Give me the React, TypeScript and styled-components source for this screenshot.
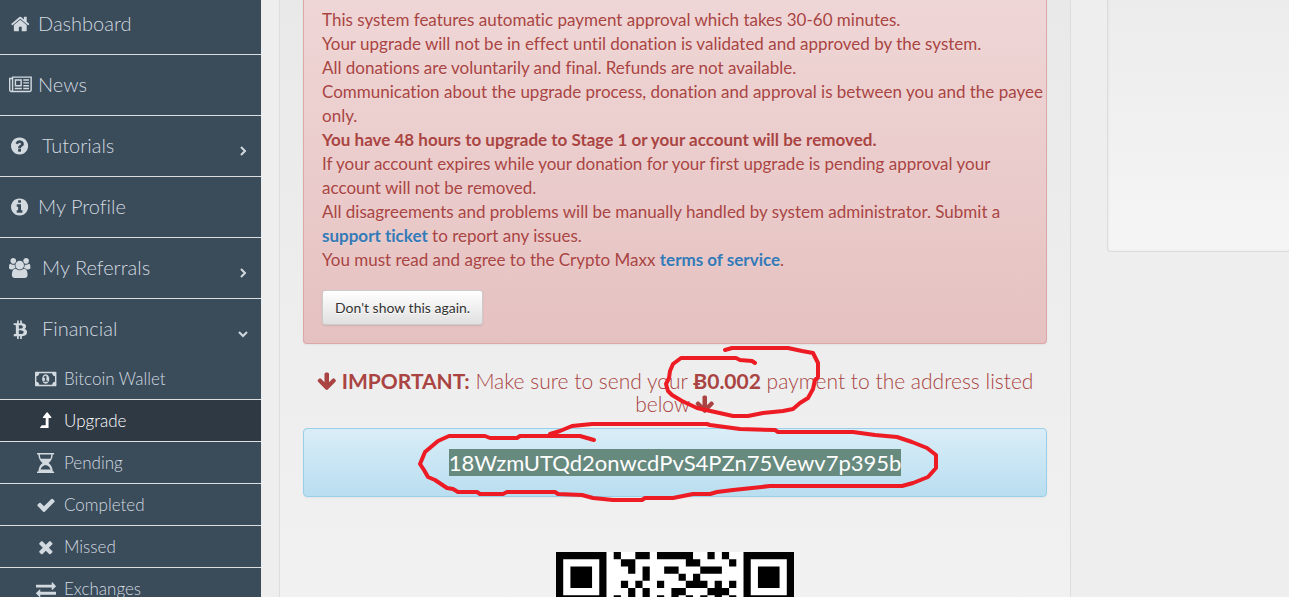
import React from 'react';
import styled, { createGlobalStyle } from 'styled-components';

const GlobalStyle = createGlobalStyle`
  *, *::before, *::after { box-sizing: border-box; }
  html, body { margin: 0; }
  body {
    background: #eeeeee;
    font-family: Lato, "Liberation Sans", sans-serif;
    font-size: 17px;
    font-variant-ligatures: none;
    line-height: 24px;
  }
`;

const DISC =
  'm640 416q0 209-103 385.5t-279.5 279.5-385.5 103-385.5-103-279.5-279.5-103-385.5 103-385.5 279.5-279.5 385.5-103 385.5 103 279.5 279.5 103 385.5z';

const GLYPHS = {
  home: { box: '64 0 1664 1792', d: 'M1472 992v480q0 26-19 45t-45 19h-384v-384h-256v384h-384q-26 0-45-19t-19-45v-480q0-1 .5-3t.5-3l575-474 575 474q1 2 1 6zm223-69l-62 74q-8 9-21 11h-3q-13 0-21-7l-692-577-692 577q-12 8-24 7-13-2-21-11l-62-74q-8-10-7-23.5t11-21.5l719-599q32-26 76-26t76 26l244 204v-195q0-14 9-23t23-9h192q14 0 23 9t9 23v408l219 182q10 8 11 21.5t-7 23.5z' },
  news: { box: '0 0 2048 1792', d: 'M1024 512h-384v384h384v-384zm128 640v128h-640v-128h640zm0-768v640h-640v-640h640zm640 768v128h-512v-128h512zm0-256v128h-512v-128h512zm0-256v128h-512v-128h512zm0-256v128h-512v-128h512zm-1536 960v-960h-128v960q0 26 19 45t45 19 45-19 19-45zm1664 0v-1088h-1536v1088q0 33-11 64h1483q26 0 45-19t19-45zm128-1216v1216q0 80-56 136t-136 56h-1664q-80 0-136-56t-56-136v-1088h256v-128h1792z' },
  question: { box: '128 0 1536 1792', d: 'M1024 1376v-192q0-14-9-23t-23-9h-192q-14 0-23 9t-9 23v192q0 14 9 23t23 9h192q14 0 23-9t9-23zm256-672q0-88-55.5-163t-138.5-116-170-41q-243 0-371 213-15 24 8 42l132 100q7 6 19 6 16 0 25-12 53-68 86-92 34-24 86-24 48 0 85.5 26t37.5 59q0 38-20 61t-68 45q-63 28-115.5 86.5t-52.5 125.5v36q0 14 9 23t23 9h192q14 0 23-9t9-23q0-19 21.5-49.5t54.5-49.5q32-18 49-28.5t46-35 44.5-48 28-60.5 12.5-81zm384 192q0 209-103 385.5t-279.5 279.5-385.5 103-385.5-103-279.5-279.5-103-385.5 103-385.5 279.5-279.5 385.5-103 385.5 103 279.5 279.5 103 385.5z' },
  info: { box: '128 0 1536 1792', d: 'M1152 1376v-160q0-14-9-23t-23-9h-96v-512q0-14-9-23t-23-9h-320q-14 0-23 9t-9 23v160q0 14 9 23t23 9h96v320h-96q-14 0-23 9t-9 23v160q0 14 9 23t23 9h448q14 0 23-9t9-23zm-128-896v-160q0-14-9-23t-23-9h-192q-14 0-23 9t-9 23v160q0 14 9 23t23 9h192q14 0 23-9t9-23z' + DISC },
  users: { box: '-64 0 1920 1792', d: 'M529 896q-162 5-265 128h-134q-82 0-138-40.5t-56-118.5q0-353 124-353 6 0 43.5 21t97.5 42.5 119 21.5q67 0 133-23-5 37-5 66 0 139 81 256zm1071 637q0 120-73 189.5t-194 69.5h-874q-121 0-194-69.5t-73-189.5q0-53 3.5-103.5t14-109 26.5-108.5 43-97.5 62-81 85.5-53.5 111.5-20q10 0 43 21.5t73 48 107 48 135 21.5 135-21.5 107-48 73-48 43-21.5q61 0 111.5 20t85.5 53.5 62 81 43 97.5 26.5 108.5 14 109 3.5 103.5zm-1024-1277q0 106-75 181t-181 75-181-75-75-181 75-181 181-75 181 75 75 181zm704 384q0 159-112.5 271.5t-271.5 112.5-271.5-112.5-112.5-271.5 112.5-271.5 271.5-112.5 271.5 112.5 112.5 271.5zm576 225q0 78-56 118.5t-138 40.5h-134q-103-123-265-128 81-117 81-256 0-29-5-66 66 23 133 23 59 0 119-21.5t97.5-42.5 43.5-21q124 0 124 353zm-128-609q0 106-75 181t-181 75-181-75-75-181 75-181 181-75 181 75 75 181z' },
  bitcoin: { box: '0 0 1280 1792', d: 'M1167 640q18 182-131 258 117 28 175 103t45 214q-7 71-32.5 125t-64.5 89-97 58.5-121.5 34.5-145.5 15v255h-154v-251q-80 0-122-1v252h-154v-255q-18 0-54-.5t-55-.5h-200l31-183h111q50 0 58-51v-402h16q-6-1-16-1v-287q-13-68-89-68h-111v-164l212 1q64 0 97-1v-252h154v247q82-2 122-2v-245h154v252q79 7 140 22.5t113 45 82.5 78 36.5 114.5zm-215 545q0-36-15-64t-37-46-57.5-30.5-65.5-18.5-74-9-69-3-64.5 1-47.5 1v338q8 0 37 .5t48 .5 53-1.5 58.5-4 57-8.5 55.5-14 47.5-21 39.5-30 24.5-40 9.5-51zm-71-476q0-33-12.5-58.5t-30.5-42-48-28-55-16.5-61.5-8-58-2.5-54 1-39.5.5v307q5 0 34.5.5t46.5 0 50-2 55-5.5 51.5-11 48.5-18.5 37-27 27-38.5 9-51z' },
  money: { box: '0 0 1920 1792', d: 'M768 1152h384v-96h-128v-448h-114l-148 137 77 80q42-37 55-57h2v288h-128v96zm512-256q0 70-21 142t-59.5 134-101.5 101-138 39-138-39-101.5-101-59.5-134-21-142 21-142 59.5-134 101.5-101 138-39 138 39 101.5 101 59.5 134 21 142zm512 256v-512q-106 0-181-75t-75-181h-1152q0 106-75 181t-181 75v512q106 0 181 75t75 181h1152q0-106 75-181t181-75zm128-832v1152q0 26-19 45t-45 19h-1792q-26 0-45-19t-19-45v-1152q0-26 19-45t45-19h1792q26 0 45 19t19 45z' },
  levelUp: { box: '0 0 1024 1792', d: 'M1018 595q-18 37-58 37h-192v864q0 14-9 23t-23 9h-704q-21 0-29-18-8-20 4-35l160-192q9-11 25-11h320v-640h-192q-40 0-58-37-17-37 9-68l320-384q18-22 49-22t49 22l320 384q27 32 9 68z' },
  hourglass: { box: '128 0 1536 1792', d: 'M1536 128q0 261-106.5 461.5t-266.5 306.5q160 106 266.5 306.5t106.5 461.5h96q14 0 23 9t9 23v64q0 14-9 23t-23 9h-1472q-14 0-23-9t-9-23v-64q0-14 9-23t23-9h96q0-261 106.5-461.5t266.5-306.5q-160-106-266.5-306.5t-106.5-461.5h-96q-14 0-23-9t-9-23v-64q0-14 9-23t23-9h1472q14 0 23 9t9 23v64q0 14-9 23t-23 9h-96zm-128 0h-1024q0 206 85 384h854q85-178 85-384zm-57 1344q-54-141-145.5-241.5t-194.5-142.5h-230q-103 42-194.5 142.5t-145.5 241.5h910z' },
  check: { box: '0 0 1792 1792', d: 'M1671 566q0 40-28 68l-724 724-136 136q-28 28-68 28t-68-28l-136-136-362-362q-28-28-28-68t28-68l136-136q28-28 68-28t68 28l294 295 656-657q28-28 68-28t68 28l136 136q28 28 28 68z' },
  times: { box: '192 0 1408 1792', d: 'M1490 1322q0 40-28 68l-136 136q-28 28-68 28t-68-28l-294-294-294 294q-28 28-68 28t-68-28l-136-136q-28-28-28-68t28-68l294-294-294-294q-28-28-28-68t28-68l136-136q28-28 68-28t68 28l294 294 294-294q28-28 68-28t68 28l136 136q28 28 28 68t-28 68l-294 294 294 294q28 28 28 68z' },
  exchange: { box: '0 0 1792 1792', d: 'M1792 1184v192q0 13-9.5 22.5t-22.5 9.5h-1376v192q0 13-9.5 22.5t-22.5 9.5q-12 0-24-10l-319-320q-9-9-9-22 0-14 9-23l320-320q9-9 23-9 13 0 22.5 9.5t9.5 22.5v192h1376q13 0 22.5 9.5t9.5 22.5zm0-544q0 14-9 23l-320 320q-9 9-23 9-13 0-22.5-9.5t-9.5-22.5v-192h-1376q-13 0-22.5-9.5t-9.5-22.5v-192q0-13 9.5-22.5t22.5-9.5h1376v-192q0-14 9-23t23-9q12 0 24 10l319 319q9 9 9 23z' },
  arrowDown: { box: '64 0 1664 1792', d: 'M1675 832q0 53-37 90l-651 652q-39 37-91 37-53 0-90-37l-651-652q-38-36-38-90 0-53 38-91l74-75q39-37 91-37 53 0 90 37l294 294v-704q0-52 38-90t90-38h128q52 0 90 38t38 90v704l294-294q37-37 90-37 52 0 91 37l75 75q37 39 37 91z' },
};

type GlyphName = keyof typeof GLYPHS;

const GlyphSvg = styled.svg<{ $size: number }>`
  height: ${(p) => p.$size}px;
  flex: none;
  fill: currentColor;
  overflow: visible;
`;

function Glyph({ name, size = 20 }: { name: GlyphName; size?: number }) {
  return (
    <GlyphSvg $size={size} viewBox={GLYPHS[name].box} aria-hidden="true">
      <path d={GLYPHS[name].d} />
    </GlyphSvg>
  );
}

const Page = styled.div`
  position: relative;
  display: flex;
  height: 100vh;
  overflow: hidden;
`;

const Sidebar = styled.nav`
  flex: 0 0 261px;
  margin-top: -6px;
  background: #3a4b59;
`;

const MenuList = styled.ul`
  list-style: none;
  margin: 0;
  padding: 0;
`;

const MenuItem = styled.li`
  & + & { border-top: 1px solid #dcdfe2; }
`;

const MenuLabel = styled.span<{ $gap: number }>`
  flex: 1;
  margin-left: ${(p) => p.$gap}px;
`;

const MenuLink = styled.a<{ $open?: boolean }>`
  display: flex;
  align-items: center;
  height: ${(p) => (p.$open ? 59 : 60)}px;
  padding: 0 12px 0 8px;
  color: #d2dae0;
  font-size: 20px;
  font-weight: 300;
  text-decoration: none;

  ${MenuLabel} { padding-bottom: 2px; }
`;

const SubLink = styled.a<{ $active?: boolean }>`
  display: flex;
  align-items: center;
  height: 41px;
  padding: 0 12px 0 34px;
  background: ${(p) => (p.$active ? '#2f3944' : 'transparent')};
  color: ${(p) => (p.$active ? '#ffffff' : '#d2dae0')};
  font-size: 17px;
  font-weight: 300;
  text-decoration: none;
`;

const IconSlot = styled.span`
  display: flex;
  justify-content: center;
  width: 24px;
`;

const Caret = styled.svg<{ $open: boolean }>`
  width: 12px;
  height: 12px;
  margin-top: 10px;
  fill: none;
  stroke: currentColor;
  stroke-width: 2;
  transform: ${(p) => (p.$open ? 'rotate(90deg)' : 'none')};
`;

const Content = styled.main`
  flex: 1;
  min-width: 0;
  margin-left: 18px;
  padding: 0 23px;
  border: solid #dddddd;
  border-width: 0 1px;
  background: linear-gradient(#e9e9e9, #f1f1f1);
`;

const Alert = styled.section`
  padding: 8px 0 18px 18px;
  border: 1px solid #dca7a7;
  border-top: 0;
  border-radius: 0 0 4px 4px;
  background: linear-gradient(#efd6d6, #e6c1c1);
  box-shadow: 0 1px 2px rgba(0, 0, 0, 0.05);
  color: #a94442;
  text-shadow: 0 1px 0 rgba(255, 255, 255, 0.2);
`;

const AlertText = styled.p`
  margin: 0;
`;

const TextLink = styled.a`
  color: #337ab7;
  font-weight: 700;
  text-decoration: none;
`;

const DismissButton = styled.button`
  display: block;
  height: 35px;
  margin-top: 18px;
  padding: 0 12px;
  border: 1px solid #cccccc;
  border-radius: 3px;
  background: linear-gradient(#ffffff, #e0e0e0);
  box-shadow: 0 1px 2px rgba(0, 0, 0, 0.1);
  color: #333333;
  font: 400 14px/20px Lato, "Liberation Sans", sans-serif;
  text-shadow: 0 1px 0 #ffffff;
`;

const Notice = styled.h3`
  margin: 25px 0 13px;
  color: #a94442;
  font-size: 21px;
  font-weight: 300;
  line-height: 23px;
  text-align: center;

  b { font-weight: 700; }
  svg { vertical-align: -3px; }
`;

const AddressBox = styled.div`
  display: flex;
  justify-content: center;
  padding: 20px 18px;
  border: 1px solid #9acfea;
  border-radius: 4px;
  background: linear-gradient(#d9edf7, #b9def0);
  box-shadow: 0 1px 2px rgba(0, 0, 0, 0.05);
  font-size: 22px;
  line-height: 27px;
`;

const Address = styled.mark`
  background: #678a7f;
  color: #ffffff;
`;

const QrCode = styled.svg`
  display: block;
  width: 238px;
  margin: 55px auto 0;
  background: #ffffff;
`;

const Aside = styled.aside`
  flex: 0 0 182px;
  align-self: flex-start;
  height: 252px;
  margin-left: 36px;
  border: solid #dcdcdc;
  border-width: 0 0 1px 1px;
  border-bottom-left-radius: 4px;
  background: linear-gradient(#ececec, #f5f5f5);
  box-shadow: inset 1px -1px 2px rgba(0, 0, 0, 0.03);
`;

const Marker = styled.svg`
  position: absolute;
  top: 345px;
  left: 415px;
  width: 525px;
  height: 160px;
  fill: none;
  stroke: #ed1c24;
  stroke-width: 4;
  stroke-linecap: round;
  stroke-linejoin: round;
  pointer-events: none;
`;

const menu: { icon: GlyphName; label: string; group?: boolean; open?: boolean }[] = [
  { icon: 'home', label: 'Dashboard' },
  { icon: 'news', label: 'News' },
  { icon: 'question', label: 'Tutorials', group: true },
  { icon: 'info', label: 'My Profile' },
  { icon: 'users', label: 'My Referrals', group: true },
  { icon: 'bitcoin', label: 'Financial', group: true, open: true },
];

const financial: { icon: GlyphName; label: string; active?: boolean }[] = [
  { icon: 'money', label: 'Bitcoin Wallet' },
  { icon: 'levelUp', label: 'Upgrade', active: true },
  { icon: 'hourglass', label: 'Pending' },
  { icon: 'check', label: 'Completed' },
  { icon: 'times', label: 'Missed' },
  { icon: 'exchange', label: 'Exchanges' },
];

const qrRows = [
  '#######.#..##.#####..#.#..#######',
  '#.....#..##.......##....#.#.....#',
  '#.###.#...#.#..##...###...#.###.#',
  '#.###.#.....#....#.#......#.###.#',
  '#.###.#..#.#..#...###.#.#.#.###.#',
  '#.....#...#.#...##...###..#.....#',
  '#######.#.#.#.#.#.#.#.#.#.#######',
];

const qrPath = qrRows
  .map((row, y) =>
    Array.from(row.matchAll(/#+/g))
      .map((run) => `M${run.index} ${y}h${run[0].length}v1h-${run[0].length}z`)
      .join(''),
  )
  .join('');

export default function App() {
  return (
    <>
      <GlobalStyle />
      <Page>
        <Sidebar aria-label="Main menu">
          <MenuList>
            {menu.map((item) => (
              <MenuItem key={item.label}>
                <MenuLink href="#" $open={item.open}>
                  <IconSlot><Glyph name={item.icon} /></IconSlot>
                  <MenuLabel $gap={item.group ? 10 : 6}>{item.label}</MenuLabel>
                  {item.group && (
                    <Caret $open={!!item.open} viewBox="0 0 12 12" aria-hidden="true">
                      <path d="M4 2l4 4-4 4" />
                    </Caret>
                  )}
                </MenuLink>
                {item.open && (
                  <MenuList>
                    {financial.map((sub) => (
                      <MenuItem key={sub.label}>
                        <SubLink href="#" $active={sub.active}>
                          <IconSlot><Glyph name={sub.icon} /></IconSlot>
                          <MenuLabel $gap={6}>{sub.label}</MenuLabel>
                        </SubLink>
                      </MenuItem>
                    ))}
                  </MenuList>
                )}
              </MenuItem>
            ))}
          </MenuList>
        </Sidebar>

        <Content>
          <Alert role="alert">
            <AlertText>This system features automatic payment approval which takes 30-60 minutes.</AlertText>
            <AlertText>Your upgrade will not be in effect until donation is validated and approved by the system.</AlertText>
            <AlertText>All donations are voluntarily and final. Refunds are not available.</AlertText>
            <AlertText>Communication about the upgrade process, donation and approval is between you and the payee only.</AlertText>
            <AlertText><b>You have 48 hours to upgrade to Stage 1 or your account will be removed.</b></AlertText>
            <AlertText>If your account expires while your donation for your first upgrade is pending approval your account will not be removed.</AlertText>
            <AlertText>
              All disagreements and problems will be manually handled by system administrator. Submit a{' '}
              <TextLink href="#">support ticket</TextLink> to report any issues.
            </AlertText>
            <AlertText>
              You must read and agree to the Crypto Maxx <TextLink href="#">terms of service</TextLink>.
            </AlertText>
            <DismissButton type="button">Don't show this again.</DismissButton>
          </Alert>

          <Notice>
            <Glyph name="arrowDown" size={21} /> <b>IMPORTANT:</b> Make sure to send your <b>Ƀ0.002</b> payment to
            the address listed below <Glyph name="arrowDown" size={21} />
          </Notice>

          <AddressBox>
            <Address>18WzmUTQd2onwcdPvS4PZn75Vewv7p395b</Address>
          </AddressBox>

          <QrCode viewBox="0 0 33 7" role="img" aria-label="Payment QR code">
            <path d={qrPath} />
          </QrCode>
        </Content>

        <Aside />

        <Marker viewBox="415 345 525 160" aria-hidden="true">
          <path d="M755 363L752 361L740 360L736 358H681L673 364L670 371L669 378L666 384L668 391L672 395L682 401L697 408L715 412L733 416H748L763 413L783 411L793 409L800 403L808 398L813 389L815 380L818 377V363L813 353L802 351L788 348H732L725 350" />
          <path d="M594 440L580 436H520L517 438H490L485 436H449L438 441L425 452L420 464L424 470L428 477L435 480L447 488L453 489L458 492H477L480 494H503L507 492H555L558 494L582 495L593 498L613 500H642L645 498H673L693 494H710L717 492L733 490L770 486H902L913 483L928 477L936 468V455L927 448L912 442L897 437L875 435L853 432H778L775 430L740 429L710 425L707 424H592L572 426L560 431L550 434" />
        </Marker>
      </Page>
    </>
  );
}
